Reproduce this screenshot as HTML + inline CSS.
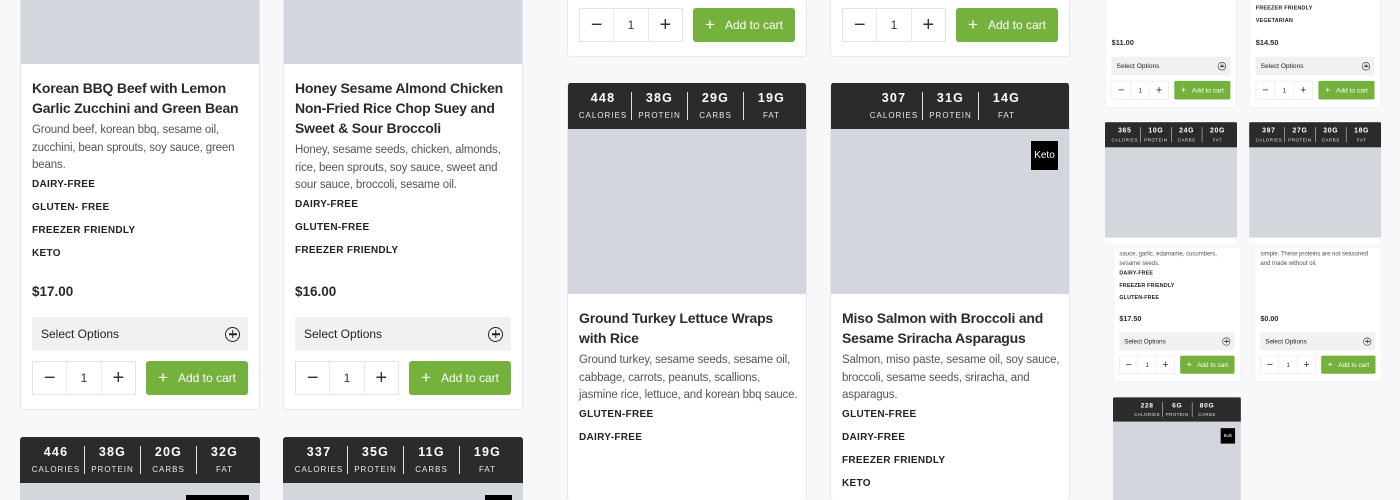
<!DOCTYPE html>
<html><head><meta charset="utf-8">
<style>
*{box-sizing:border-box;margin:0;padding:0}
html,body{width:1400px;height:500px;overflow:hidden}
body{background:#f7f8fa;position:relative;font-family:"Liberation Sans",sans-serif;color:#2a2a2a}
.card{position:absolute;width:240px;background:#fff;border:1px solid #e6e8eb;border-radius:3px;display:flex;flex-direction:column;overflow:hidden}
.img{background:#d4d6dd;flex:none;position:relative}
.body{flex:1;padding:14px 11px 0 11px}
.t{font-weight:bold;font-size:14px;line-height:20px;letter-spacing:-0.2px;color:#2b2b2b;white-space:nowrap}
.d{font-size:11.5px;line-height:17.5px;color:#555;margin-top:4px;letter-spacing:-0.15px;white-space:nowrap}
.tag{font-size:10px;font-weight:bold;letter-spacing:0.3px;line-height:23px;color:#222;white-space:nowrap}
.body .d + .tag{margin-top:-2px}
.foot{flex:none;padding:0 11px 14px 11px}
.price{font-size:13.5px;font-weight:bold;line-height:20px;color:#2b2b2b}
.sel{margin-top:15px;height:34px;background:#f1f1f2;display:flex;align-items:center;justify-content:space-between;padding:0 8px 0 9px;font-size:12px;color:#222;white-space:nowrap}
.circ{width:15px;height:15px;border:1.5px solid #222;border-radius:50%;position:relative}
.circ:before,.circ:after{content:"";position:absolute;background:#222;left:50%;top:50%;transform:translate(-50%,-50%)}
.circ:before{width:8px;height:1.5px}.circ:after{width:1.5px;height:8px}
.row{margin-top:10px;display:flex;justify-content:space-between;height:34px}
.qty{display:flex;border:1px solid #e3e3e3;width:104px}
.qty div{flex:1;display:flex;align-items:center;justify-content:center;font-size:12px;color:#333;border-right:1px solid #e9e9e9}
.qty div:last-child{border-right:0}
.qty .s{font-size:20px;font-weight:300}
.btn{width:102px;background:#74b13d;border-radius:3px;color:#fff;font-size:12px;display:flex;align-items:center;justify-content:center;gap:10px;white-space:nowrap}
.btn b{font-size:17px;font-weight:normal}
.nut{flex:none;height:46px;background:#2b2b2b;display:flex;justify-content:center;align-items:center}
.nut div{width:56px;text-align:center;color:#fff;border-left:1px solid #ddd;height:28px;display:flex;flex-direction:column;justify-content:space-between}
.nut div:first-child{border-left:0}
.nut b{font-size:12.5px;letter-spacing:1.2px;line-height:13px}
.nut span{font-size:8px;letter-spacing:1px;color:#e8e8e8;line-height:9px}
.badge{position:absolute;top:12px;right:11px;background:#000;color:#fff;font-size:10px;height:29px;display:flex;align-items:center;justify-content:center}
.w{position:absolute;transform-origin:0 0}
</style></head><body>

<div class="card" style="left:20px;top:-100px;height:510px">
 <div class="img" style="height:163px"></div>
 <div class="body">
  <div class="t">Korean BBQ Beef with Lemon<br>Garlic Zucchini and Green Bean</div>
  <div class="d">Ground beef, korean bbq, sesame oil,<br>zucchini, bean sprouts, soy sauce, green<br>beans.</div>
  <div class="tag">DAIRY-FREE</div><div class="tag">GLUTEN- FREE</div><div class="tag">FREEZER FRIENDLY</div><div class="tag">KETO</div>
 </div>
 <div class="foot"><div class="price">$17.00</div><div class="sel">Select Options<span class="circ"></span></div>
 <div class="row"><div class="qty"><div class="s">−</div><div>1</div><div class="s">+</div></div><div class="btn"><b>+</b>Add to cart</div></div></div>
</div>
<div class="card" style="left:283px;top:-100px;height:510px">
 <div class="img" style="height:163px"></div>
 <div class="body">
  <div class="t">Honey Sesame Almond Chicken<br>Non-Fried Rice Chop Suey and<br>Sweet &amp; Sour Broccoli</div>
  <div class="d">Honey, sesame seeds, chicken, almonds,<br>rice, been sprouts, soy sauce, sweet and<br>sour sauce, broccoli, sesame oil.</div>
  <div class="tag">DAIRY-FREE</div><div class="tag">GLUTEN-FREE</div><div class="tag">FREEZER FRIENDLY</div>
 </div>
 <div class="foot"><div class="price">$16.00</div><div class="sel">Select Options<span class="circ"></span></div>
 <div class="row"><div class="qty"><div class="s">−</div><div>1</div><div class="s">+</div></div><div class="btn"><b>+</b>Add to cart</div></div></div>
</div>
<div class="card" style="left:20px;top:437px;height:63px;border:0;border-radius:3px 3px 0 0">
 <div class="nut"><div><b>446</b><span>CALORIES</span></div><div><b>38G</b><span>PROTEIN</span></div><div><b>20G</b><span>CARBS</span></div><div><b>32G</b><span>FAT</span></div></div>
 <div class="img" style="height:17px"><div class="badge" style="width:63px"></div></div>
</div>
<div class="card" style="left:283px;top:437px;height:63px;border:0;border-radius:3px 3px 0 0">
 <div class="nut"><div><b>337</b><span>CALORIES</span></div><div><b>35G</b><span>PROTEIN</span></div><div><b>11G</b><span>CARBS</span></div><div><b>19G</b><span>FAT</span></div></div>
 <div class="img" style="height:17px"><div class="badge" style="width:27px"></div></div>
</div>

<div class="card" style="left:567px;top:-400px;height:457px">
 <div class="body"></div>
 <div class="foot"><div class="price"></div><div class="sel">Select Options<span class="circ"></span></div>
 <div class="row"><div class="qty"><div class="s">−</div><div>1</div><div class="s">+</div></div><div class="btn"><b>+</b>Add to cart</div></div></div>
</div>
<div class="card" style="left:830px;top:-400px;height:457px">
 <div class="body"></div>
 <div class="foot"><div class="price"></div><div class="sel">Select Options<span class="circ"></span></div>
 <div class="row"><div class="qty"><div class="s">−</div><div>1</div><div class="s">+</div></div><div class="btn"><b>+</b>Add to cart</div></div></div>
</div>
<div class="card" style="left:567px;top:83px;height:417px;border-top:0;border-bottom:0">
 <div class="nut"><div><b>448</b><span>CALORIES</span></div><div><b>38G</b><span>PROTEIN</span></div><div><b>29G</b><span>CARBS</span></div><div><b>19G</b><span>FAT</span></div></div>
 <div class="img" style="height:165px"></div>
 <div class="body">
  <div class="t">Ground Turkey Lettuce Wraps<br>with Rice</div>
  <div class="d">Ground turkey, sesame seeds, sesame oil,<br>cabbage, carrots, peanuts, scallions,<br>jasmine rice, lettuce, and korean bbq sauce.</div>
  <div class="tag">GLUTEN-FREE</div><div class="tag">DAIRY-FREE</div>
 </div>
</div>
<div class="card" style="left:830px;top:83px;height:417px;border-top:0;border-bottom:0">
 <div class="nut"><div><b>307</b><span>CALORIES</span></div><div><b>31G</b><span>PROTEIN</span></div><div><b>14G</b><span>FAT</span></div></div>
 <div class="img" style="height:165px"><div class="badge" style="width:27px">Keto</div></div>
 <div class="body">
  <div class="t">Miso Salmon with Broccoli and<br>Sesame Sriracha Asparagus</div>
  <div class="d">Salmon, miso paste, sesame oil, soy sauce,<br>broccoli, sesame seeds, sriracha, and<br>asparagus.</div>
  <div class="tag">GLUTEN-FREE</div><div class="tag">DAIRY-FREE</div><div class="tag">FREEZER FRIENDLY</div><div class="tag">KETO</div>
 </div>
</div>

<div class="w" style="left:1105px;top:0;transform:scale(.55)">
 <div class="card" style="left:0;top:-200px;height:396px">
  <div class="body" style="display:flex;flex-direction:column;justify-content:flex-end;padding-bottom:19px"></div>
  <div class="foot"><div class="price">$11.00</div><div class="sel">Select Options<span class="circ"></span></div>
  <div class="row"><div class="qty"><div class="s">−</div><div>1</div><div class="s">+</div></div><div class="btn"><b>+</b>Add to cart</div></div></div>
 </div>
 <div class="card" style="left:262px;top:-200px;height:396px">
  <div class="body" style="display:flex;flex-direction:column;justify-content:flex-end;padding-bottom:19px"><div class="tag">FREEZER FRIENDLY</div><div class="tag">VEGETARIAN</div></div>
  <div class="foot"><div class="price">$14.50</div><div class="sel">Select Options<span class="circ"></span></div>
  <div class="row"><div class="qty"><div class="s">−</div><div>1</div><div class="s">+</div></div><div class="btn"><b>+</b>Add to cart</div></div></div>
 </div>
 <div class="card" style="left:0;top:222px;height:220px;border:0">
  <div class="nut"><div><b>365</b><span>CALORIES</span></div><div><b>10G</b><span>PROTEIN</span></div><div><b>24G</b><span>CARBS</span></div><div><b>20G</b><span>FAT</span></div></div>
  <div class="img" style="height:164px"></div><div style="background:#fff;flex:1"></div>
 </div>
 <div class="card" style="left:262px;top:222px;height:220px;border:0">
  <div class="nut"><div><b>397</b><span>CALORIES</span></div><div><b>27G</b><span>PROTEIN</span></div><div><b>30G</b><span>CARBS</span></div><div><b>18G</b><span>FAT</span></div></div>
  <div class="img" style="height:164px"></div><div style="background:#fff;flex:1"></div>
 </div>
</div>

<div style="position:absolute;left:1090px;top:248px;width:310px;height:252px;overflow:hidden;background:#f7f8fa">
 <div class="w" style="left:23px;top:-8px;transform:scale(.533)">
  <div class="card" style="left:0;top:0;height:266px;border-top:0">
   <div class="body"><div class="d">sauce, garlic, edamame, cucumbers,<br>sesame seeds.</div><div class="tag">DAIRY-FREE</div><div class="tag">FREEZER FRIENDLY</div><div class="tag">GLUTEN-FREE</div></div>
   <div class="foot"><div class="price">$17.50</div><div class="sel">Select Options<span class="circ"></span></div>
   <div class="row"><div class="qty"><div class="s">−</div><div>1</div><div class="s">+</div></div><div class="btn"><b>+</b>Add to cart</div></div></div>
  </div>
  <div class="card" style="left:0;top:295px;height:200px;border:0">
   <div class="nut"><div><b>228</b><span>CALORIES</span></div><div><b>6G</b><span>PROTEIN</span></div><div><b>80G</b><span>CARBS</span></div></div>
   <div class="img" style="height:160px"><div class="badge" style="width:27px;height:29px;font-size:8px">Bulk</div></div>
  </div>
 </div>
 <div class="w" style="left:164px;top:-8px;transform:scale(.533)">
  <div class="card" style="left:0;top:0;height:266px;border-top:0">
   <div class="body"><div class="d">simple. These proteins are not seasoned<br>and made without oil.</div></div>
   <div class="foot"><div class="price">$0.00</div><div class="sel">Select Options<span class="circ"></span></div>
   <div class="row"><div class="qty"><div class="s">−</div><div>1</div><div class="s">+</div></div><div class="btn"><b>+</b>Add to cart</div></div></div>
  </div>
 </div>
</div>
</body></html>
